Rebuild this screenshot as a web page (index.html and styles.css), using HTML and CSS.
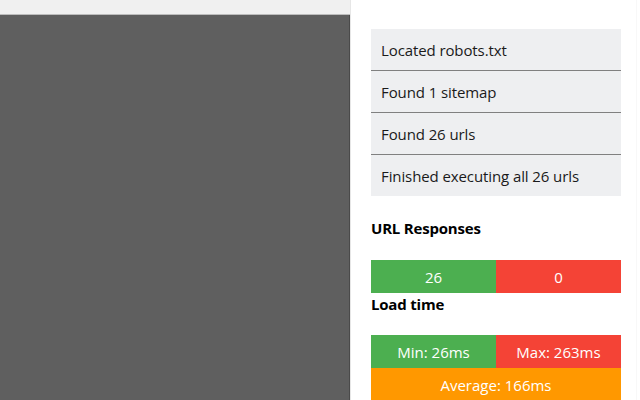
FILE: index.html
```html
<!DOCTYPE html>
<html>
<head>
<meta charset="utf-8">
<link rel="stylesheet" href="styles.css">
</head>
<body>
<div class="page">
  <div class="backdrop">
    <div class="topbar"></div>
    <div class="dim"></div>
  </div>
  <div class="panel">
    <ul class="log">
      <li>Located robots.txt</li>
      <li>Found 1 sitemap</li>
      <li>Found 26 urls</li>
      <li>Finished executing all 26 urls</li>
    </ul>
    <h3 class="heading first">URL Responses</h3>
    <div class="bar">
      <div class="seg ok">26</div>
      <div class="seg bad">0</div>
    </div>
    <h3 class="heading">Load time</h3>
    <div class="bar">
      <div class="seg ok">Min: 26ms</div>
      <div class="seg bad">Max: 263ms</div>
    </div>
    <div class="bar">
      <div class="seg avg">Average: 166ms</div>
    </div>
  </div>
</div>
</body>
</html>
```
FILE: styles.css
```css
html, body {
  margin: 0;
  padding: 0;
  height: 100%;
  overflow: hidden;
}
body {
  font-family: "Open Sans", "Noto Sans", sans-serif;
  background: #fff;
}
.page {
  display: flex;
  height: 400px;
}
.backdrop {
  width: 350px;
  display: flex;
  flex-direction: column;
  border-right: 1px solid #e6e6e6;
}
.topbar {
  height: 14px;
  background: #f0f0f0;
  border-bottom: 1px solid #bdbdbd;
}
.dim {
  flex: 1;
  background: #5f5f5f;
  border-right: 1px solid #4a4a4a;
}
.panel {
  flex: 1;
  padding: 29px 0 0 20px;
  border-right: 1px solid #f8f8f8;
  margin-right: 3px;
}
.log {
  list-style: none;
  margin: 0;
  padding: 0;
  width: 250px;
  background: #eeeff1;
}
.log li {
  height: 41px;
  line-height: 43px;
  padding-left: 10px;
  font-size: 15px;
  letter-spacing: -0.1px;
  color: #1a1a1a;
  border-top: 1px solid #808080;
}
.log li:first-child {
  border-top: none;
}
.heading {
  margin: 0 0 19px;
  font-size: 15px;
  font-weight: 700;
  line-height: 23px;
  letter-spacing: -0.2px;
  color: #000;
}
.heading.first {
  margin-top: 21px;
  margin-bottom: 20px;
}
.bar {
  display: flex;
  width: 250px;
  height: 33px;
}
.seg {
  flex: 1;
  display: flex;
  align-items: center;
  justify-content: center;
  color: #fff;
  font-size: 15px;
  padding-top: 1px;
}
.ok { background: #4caf50; }
.bad { background: #f44336; }
.avg { background: #ff9800; }
```
